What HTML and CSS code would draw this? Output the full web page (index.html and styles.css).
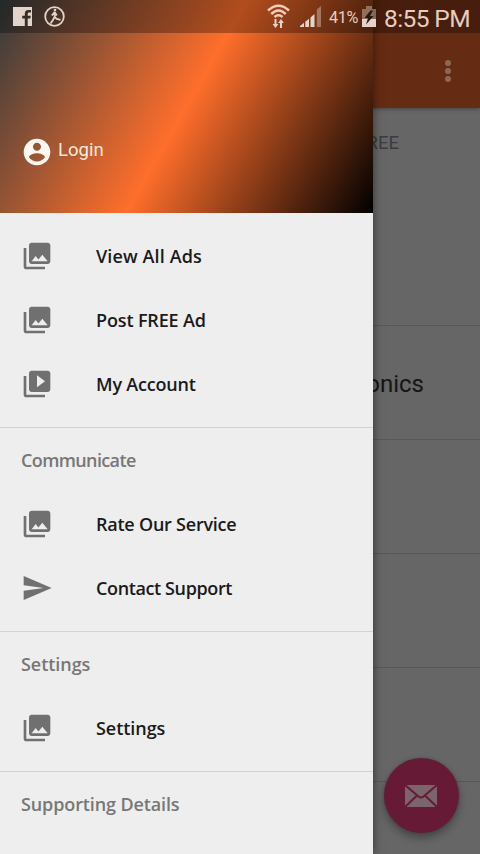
FILE: index.html
```html
<!DOCTYPE html>
<html lang="en">
<head>
<meta charset="utf-8">
<title>Classified Ads</title>
<link rel="stylesheet" href="styles.css">
</head>
<body>
<svg class="defs" width="0" height="0" aria-hidden="true">
  <symbol id="gallery" viewBox="0 0 24 24"><path d="M22 16V4c0-1.100-.9-2-2-2H8c-1.100 0-2 .9-2 2v12c0 1.100.9 2 2 2h12c1.100 0 2-.9 2-2zm-11-4l2.030 2.710L16 11l4 5H8l3-4zM2 6v14c0 1.100.9 2 2 2h14v-2H4V6H2z"/></symbol>
  <symbol id="video" viewBox="0 0 24 24"><path d="M4 6H2v14c0 1.100.9 2 2 2h14v-2H4V6zm16-4H8c-1.100 0-2 .9-2 2v12c0 1.100.9 2 2 2h12c1.100 0 2-.9 2-2V4c0-1.100-.9-2-2-2zm-8 12.500v-9l6 4.500-6 4.500z"/></symbol>
  <symbol id="send" viewBox="0 0 24 24"><path d="M2.010 21L23 12 2.010 3 2 10l15 2-15 2z"/></symbol>
</svg>
<div class="screen">
  <main class="page">
    <header class="appbar">
      <svg class="more" width="10" height="24" viewBox="0 0 10 24"><circle cx="5" cy="4" r="3"/><circle cx="5" cy="12" r="3"/><circle cx="5" cy="20" r="3"/></svg>
    </header>
    <section class="intro"><span>REE</span></section>
    <section class="row"><span>onics</span></section>
    <section class="row"></section>
    <section class="row"></section>
    <section class="row"></section>
    <section class="last"></section>
  </main>
  <div class="fab">
    <svg width="34" height="24" viewBox="0 0 34 24"><rect class="paper" x="1" y="1" width="32" height="22"/><path class="fold" d="M1 1l13.500 11.500q2.500 2 5 0L33 1M1 23l12-11.500M33 23L21 11.500"/></svg>
  </div>
  <nav class="drawer">
    <header class="profile">
      <svg width="32" height="32" viewBox="0 0 24 24"><path d="M12 2C6.480 2 2 6.480 2 12s4.480 10 10 10 10-4.480 10-10S17.520 2 12 2zm0 3c1.660 0 3 1.340 3 3s-1.340 3-3 3-3-1.340-3-3 1.340-3 3-3zm0 14.200c-2.500 0-4.710-1.280-6-3.220.03-1.990 4-3.080 6-3.080 1.990 0 5.970 1.090 6 3.080-1.290 1.940-3.500 3.220-6 3.220z"/></svg>
      <span>Login</span>
    </header>
    <section class="group first">
      <a class="item"><svg><use href="#gallery"/></svg><span class="view">View All Ads</span></a>
      <a class="item"><svg><use href="#gallery"/></svg><span class="post">Post FREE Ad</span></a>
      <a class="item"><svg><use href="#video"/></svg><span class="account">My Account</span></a>
    </section>
    <section class="group">
      <h2><span class="communicate">Communicate</span></h2>
      <a class="item"><svg><use href="#gallery"/></svg><span class="rate">Rate Our Service</span></a>
      <a class="item"><svg><use href="#send"/></svg><span class="contact">Contact Support</span></a>
    </section>
    <section class="group">
      <h2><span class="settings">Settings</span></h2>
      <a class="item"><svg><use href="#gallery"/></svg><span class="settings">Settings</span></a>
    </section>
    <section class="group">
      <h2><span class="details">Supporting Details</span></h2>
    </section>
  </nav>
  <div class="status">
    <svg class="fb" width="19" height="19" viewBox="0 0 19 19"><path d="M0 0h19v19h-4.300v-7.500h2.600l.5-2.700h-3.100V7q0-1.400 1.400-1.400h1.900V3h-2.700Q11.800 3 11.800 6.600v2.200H9.200v2.700h2.600V19H0z"/></svg>
    <svg class="runner" width="21" height="21" viewBox="0 0 21 21"><circle cx="10.500" cy="10.500" r="9.300"/><path d="M10.500 5.500l.3 5.700 2 1.800 3.700.8M10.500 11l-1.500 3-2.500 3.500M10.300 6.500L7.800 9.500M11 6.500l1.800 3"/><circle class="head" cx="11" cy="4" r="1.300"/></svg>
    <svg class="wifi" width="23" height="25" viewBox="0 0 23 25"><path class="wave" d="M1 6.500Q11.500-3 22 6.500M4.300 10Q11.500 3 18.700 10M7.500 13Q11.500 9.500 15.500 13"/><path class="arrows" d="M7.500 15h2v5h1.900L8.500 24l-2.900-4h1.900zM13 24h2v-5h1.900L14 15l-2.900 4H13z"/></svg>
    <svg class="signal" width="21" height="21" viewBox="0 0 21 21"><path d="M0 21v-1l4-3.200V21zM5.300 21v-5.300l3.700-3V21zM10.500 21v-9.500l4-3.500v13z"/><path class="dim" d="M16.800 21V3.500L21 0v21z"/></svg>
    <span class="percent">41%</span>
    <svg class="battery" width="14" height="21" viewBox="0 0 14 21"><path class="dim" d="M0 3h4V0h6v3h4v10H0z"/><path d="M0 13h14v8H0z"/><path class="bolt" d="M8.500 4.500L2.500 12H6l-2 6.500L11.500 10H8l3-5.500z"/></svg>
    <span class="clock">8:55 PM</span>
  </div>
</div>
</body>
</html>
```
FILE: styles.css
```css
* { box-sizing: border-box; }
body { margin: 0; }
.defs { position: absolute; }
.screen {
  position: relative;
  width: 480px;
  height: 854px;
  overflow: hidden;
  background: #666;
  font-family: Roboto, "Liberation Sans", sans-serif;
}
.page { height: 854px; display: flex; flex-direction: column; }
.appbar {
  height: 108px;
  padding: 59px 27px 0 0;
  display: flex;
  justify-content: flex-end;
  align-items: flex-start;
  background: #662b13;
  box-shadow: 0 1px 4px rgba(0, 0, 0, .35);
}
.more { fill: #8a6856; }
.intro, .row { border-bottom: 1px solid #585858; }
.intro {
  height: 218px;
  padding: 24px 81px 0 0;
  text-align: right;
  font-size: 18.500px;
  line-height: 22px;
  color: #393d42;
}
.row {
  height: 114px;
  padding: 2px 56px 0 0;
  display: flex;
  align-items: center;
  justify-content: flex-end;
  font-size: 24px;
  color: #151515;
}
.last { flex: 1; }
.fab {
  position: absolute;
  left: 384px;
  top: 758px;
  width: 75px;
  height: 75px;
  border-radius: 50%;
  display: grid;
  place-items: center;
  background: #661a35;
  box-shadow: 0 5px 9px rgba(0, 0, 0, .32), 0 0 3px rgba(0, 0, 0, .2);
}
.fab svg { margin-right: 2px; }
.paper { fill: #7a656d; }
.fold { fill: none; stroke: #661a35; stroke-width: 2; }
.drawer {
  position: absolute;
  left: 0;
  top: 0;
  width: 373.400px;
  height: 854px;
  overflow: hidden;
  background: #eee;
  box-shadow: 0 0 9px rgba(0, 0, 0, .5);
}
.profile {
  height: 213px;
  padding: 136px 0 0 21px;
  display: flex;
  align-items: flex-start;
  gap: 5px;
  background: linear-gradient(119.700deg, #323a3c 0%, #ff6e2b 50%, #000 100%);
  color: #ffe9dc;
  font-size: 18.600px;
  line-height: 28px;
}
.profile svg { fill: #fff8f2; }
.group {
  padding-bottom: 11px;
  border-top: 1px solid #d2d2d2;
  font-family: "Open Sans", "Noto Sans", sans-serif;
  font-size: 18px;
}
.first { padding-top: 11px; border-top: 0; }
.item {
  height: 64px;
  padding-left: 21px;
  display: flex;
  align-items: center;
  gap: 43px;
  color: #1a1a1a;
  font-weight: 600;
}
.item svg { width: 32px; height: 32px; fill: #707070; }
h2 {
  margin: 0;
  height: 64px;
  padding-left: 21px;
  display: flex;
  align-items: center;
  color: #777;
  font-size: 18px;
  font-weight: 600;
}
.item span, h2 span { white-space: nowrap; }
.view { letter-spacing: .12px; }
.post { letter-spacing: -.14px; }
.account { letter-spacing: -.2px; }
.communicate { letter-spacing: -.62px; }
.rate { letter-spacing: -.23px; }
.contact { letter-spacing: -.38px; }
.settings { letter-spacing: -.05px; }
.details { letter-spacing: -.12px; }
.status {
  position: absolute;
  left: 0;
  top: 0;
  width: 480px;
  height: 33px;
  padding: 0 10px 0 13px;
  display: flex;
  align-items: center;
  background: rgba(0, 0, 0, .3);
  color: #e8cdbf;
}
.status svg { flex: none; fill: #e3d3ca; }
.status .runner { margin-left: 12px; fill: none; stroke: #e3d3ca; stroke-width: 1.800; }
.status .runner .head { fill: #e3d3ca; stroke: none; }
.status .wifi { margin-left: auto; }
.wave { fill: none; stroke: #f0cdbb; stroke-width: 2.500; }
.signal { margin-left: 10px; }
.dim { opacity: .42; }
.percent { width: 29px; margin: 2px 0 0 8px; font-size: 16.200px; letter-spacing: -.4px; }
.battery { margin-left: 4px; }
.bolt { fill: #281812; }
.clock { width: 86px; margin-left: 8px; font-size: 24.500px; line-height: 33px; padding-top: 3px; letter-spacing: -.6px; white-space: nowrap; }
```
